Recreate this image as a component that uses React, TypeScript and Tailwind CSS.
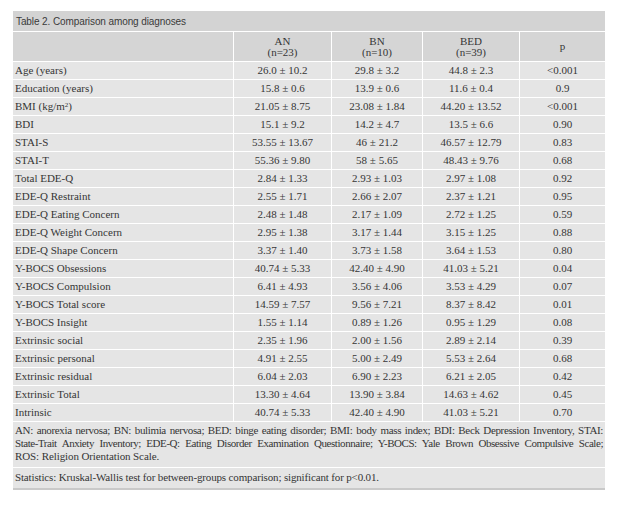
import React from "react";

const rows: [string, React.ReactNode, string, string, string, string][] = [
  ["age", "Age (years)", "26.0 ± 10.2", "29.8 ± 3.2", "44.8 ± 2.3", "<0.001"],
  ["edu", "Education (years)", "15.8 ± 0.6", "13.9 ± 0.6", "11.6 ± 0.4", "0.9"],
  ["bmi", <>BMI (kg/m<sup className="text-[7px]">2</sup>)</>, "21.05 ± 8.75", "23.08 ± 1.84", "44.20 ± 13.52", "<0.001"],
  ["bdi", "BDI", "15.1 ± 9.2", "14.2 ± 4.7", "13.5 ± 6.6", "0.90"],
  ["stais", "STAI-S", "53.55 ± 13.67", "46 ± 21.2", "46.57 ± 12.79", "0.83"],
  ["stait", "STAI-T", "55.36 ± 9.80", "58 ± 5.65", "48.43 ± 9.76", "0.68"],
  ["ede", "Total EDE-Q", "2.84 ± 1.33", "2.93 ± 1.03", "2.97 ± 1.08", "0.92"],
  ["res", "EDE-Q Restraint", "2.55 ± 1.71", "2.66 ± 2.07", "2.37 ± 1.21", "0.95"],
  ["eat", "EDE-Q Eating Concern", "2.48 ± 1.48", "2.17 ± 1.09", "2.72 ± 1.25", "0.59"],
  ["wei", "EDE-Q Weight Concern", "2.95 ± 1.38", "3.17 ± 1.44", "3.15 ± 1.25", "0.88"],
  ["sha", "EDE-Q Shape Concern", "3.37 ± 1.40", "3.73 ± 1.58", "3.64 ± 1.53", "0.80"],
  ["obs", "Y-BOCS Obsessions", "40.74 ± 5.33", "42.40 ± 4.90", "41.03 ± 5.21", "0.04"],
  ["com", "Y-BOCS Compulsion", "6.41 ± 4.93", "3.56 ± 4.06", "3.53 ± 4.29", "0.07"],
  ["tot", "Y-BOCS Total score", "14.59 ± 7.57", "9.56 ± 7.21", "8.37 ± 8.42", "0.01"],
  ["ins", "Y-BOCS Insight", "1.55 ± 1.14", "0.89 ± 1.26", "0.95 ± 1.29", "0.08"],
  ["soc", "Extrinsic social", "2.35 ± 1.96", "2.00 ± 1.56", "2.89 ± 2.14", "0.39"],
  ["per", "Extrinsic personal", "4.91 ± 2.55", "5.00 ± 2.49", "5.53 ± 2.64", "0.68"],
  ["rsd", "Extrinsic residual", "6.04 ± 2.03", "6.90 ± 2.23", "6.21 ± 2.05", "0.42"],
  ["ext", "Extrinsic Total", "13.30 ± 4.64", "13.90 ± 3.84", "14.63 ± 4.62", "0.45"],
  ["int", "Intrinsic", "40.74 ± 5.33", "42.40 ± 4.90", "41.03 ± 5.21", "0.70"],
];

const serif = "font-['Liberation_Serif','Times_New_Roman',serif]";

export default function App() {
  return (
    <div className="w-[618px] h-[507px] bg-white pt-[11px] pl-[13px]">
      <div className={`w-[592px] flex flex-col gap-px text-[#353535] ${serif}`}>
        <div className="h-[20px] bg-[#d3d3d3] pl-[3px] flex items-center font-['Liberation_Sans',Arial,sans-serif] text-[10px] tracking-[-0.1px] text-[#3a3a3a]">
          Table 2. Comparison among diagnoses
        </div>
        <div className="h-[29px] flex gap-px text-[11px] leading-[11px]">
          <div className="w-[220px] bg-[#d5d5d5]" />
          <div className="w-[97px] bg-[#d5d5d5] flex flex-col items-center justify-center">
            <span>AN</span>
            <span>(n=23)</span>
          </div>
          <div className="w-[90px] bg-[#d5d5d5] flex flex-col items-center justify-center">
            <span>BN</span>
            <span>(n=10)</span>
          </div>
          <div className="w-[96px] bg-[#d5d5d5] flex flex-col items-center justify-center">
            <span>BED</span>
            <span>(n=39)</span>
          </div>
          <div className="w-[85px] bg-[#d5d5d5] flex items-center justify-center">p</div>
        </div>
        {rows.map(([k, label, an, bn, bed, p]) => (
          <div key={k} className="h-[17px] flex gap-px text-[11px] leading-[17px]">
            <div className="w-[220px] bg-[#e5e5e5] pl-[2px]">{label}</div>
            <div className="w-[97px] bg-[#e5e5e5] text-center">{an}</div>
            <div className="w-[90px] bg-[#e5e5e5] text-center">{bn}</div>
            <div className="w-[96px] bg-[#e5e5e5] text-center">{bed}</div>
            <div className="w-[85px] bg-[#e5e5e5] text-center">{p}</div>
          </div>
        ))}
        <div className="h-[45px] bg-[#e5e5e5] px-[2px] pt-[2px] text-[11px] leading-[13px]">
          <div className="whitespace-nowrap text-justify [text-align-last:justify] tracking-[-0.35px]">
            AN: anorexia nervosa; BN: bulimia nervosa; BED: binge eating disorder; BMI: body mass index; BDI: Beck Depression Inventory, STAI:
          </div>
          <div className="whitespace-nowrap text-justify [text-align-last:justify] tracking-[-0.45px]">
            State-Trait Anxiety Inventory; EDE-Q: Eating Disorder Examination Questionnaire; Y-BOCS: Yale Brown Obsessive Compulsive Scale;
          </div>
          <div className="whitespace-nowrap tracking-[-0.1px]">ROS: Religion Orientation Scale.</div>
        </div>
        <div className="h-[22px] bg-[#e5e5e5] border-b-2 border-[#c9c9c9] px-[2px] text-[11px] leading-[19px] tracking-[-0.15px]">
          Statistics: Kruskal-Wallis test for between-groups comparison; significant for p&lt;0.01.
        </div>
      </div>
    </div>
  );
}
